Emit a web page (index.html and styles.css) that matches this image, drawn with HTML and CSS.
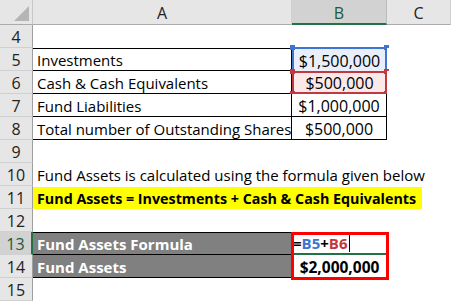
FILE: index.html
```html
<!DOCTYPE html>
<html>
<head>
<meta charset="utf-8">
<link rel="stylesheet" href="styles.css">
</head>
<body>
<div class="sheet">
  <div class="corner"><span class="tri"></span></div>
  <div class="colhead">A</div>
  <div class="colhead active-col">B</div>
  <div class="colhead">C</div>

  <div class="rowhead">4</div><div class="cell"></div><div class="cell"></div><div class="cell"></div>

  <div class="rowhead">5</div>
  <div class="cell bt bb br">Investments</div>
  <div class="cell num ref-blue">$1,500,000<i class="h tl"></i><i class="h tr"></i></div>
  <div class="cell"></div>

  <div class="rowhead">6</div>
  <div class="cell bb br">Cash &amp; Cash Equivalents</div>
  <div class="cell num ref-red">$500,000<i class="h tl"></i><i class="h tr"></i><i class="h bl"></i><i class="h brr"></i></div>
  <div class="cell"></div>

  <div class="rowhead">7</div>
  <div class="cell bb br">Fund Liabilities</div>
  <div class="cell num bb br">$1,000,000</div>
  <div class="cell"></div>

  <div class="rowhead">8</div>
  <div class="cell bb br">Total number of Outstanding Shares</div>
  <div class="cell num bb br">$500,000</div>
  <div class="cell"></div>

  <div class="rowhead">9</div><div class="cell"></div><div class="cell"></div><div class="cell"></div>

  <div class="rowhead">10</div>
  <div class="cell span3">Fund Assets is calculated using the formula given below</div>

  <div class="rowhead">11</div>
  <div class="cell span3 nopad"><span class="hl">Fund Assets = Investments + Cash &amp; Cash Equivalents</span></div>

  <div class="rowhead">12</div><div class="cell"></div><div class="cell"></div><div class="cell"></div>

  <div class="rowhead active-row">13</div>
  <div class="cell dark bt bb br">Fund Assets Formula</div>
  <div class="cell formula"><span class="eq">=</span><span class="fb">B5</span><span class="eq">+</span><span class="fr">B6</span><span class="caret"></span></div>
  <div class="cell"></div>

  <div class="rowhead">14</div>
  <div class="cell dark bb br">Fund Assets</div>
  <div class="cell num bold total">$2,000,000</div>
  <div class="cell"></div>

  <div class="rowhead">15</div><div class="cell"></div><div class="cell"></div><div class="cell"></div>

  <div class="redbox"></div>
</div>
</body>
</html>
```

FILE: styles.css
```css
html, body {
  margin: 0;
  padding: 0;
  background: #ffffff;
}

.sheet {
  position: relative;
  display: grid;
  grid-template-columns: 33px 259px 95px 64px;
  grid-template-rows: 25px repeat(12, 23px);
  width: 451px;
  height: 301px;
  overflow: hidden;
  font-family: "Open Sans", "Liberation Sans", sans-serif;
  font-size: 15px;
  color: #000;
}

.corner {
  background: #e6e6e6;
  border-right: 1px solid #c6c6c6;
  border-bottom: 1px solid #ababab;
  box-sizing: border-box;
  position: relative;
}

.tri {
  position: absolute;
  right: 3px;
  bottom: 3px;
  width: 0;
  height: 0;
  border-left: 15px solid transparent;
  border-bottom: 15px solid #b5b5b5;
}

.colhead {
  background: #e6e6e6;
  border-bottom: 1px solid #ababab;
  border-right: 1px solid #d0d0d0;
  box-sizing: border-box;
  display: flex;
  align-items: center;
  justify-content: center;
  color: #222;
  font-size: 16px;
  padding-top: 2px;
}

.colhead.active-col {
  background: #d2d2d2;
  color: #1d5a36;
  border-bottom: 2px solid #217346;
  border-right-color: #bcbcbc;
}

.rowhead {
  background: #e6e6e6;
  border-right: 1px solid #9f9f9f;
  border-bottom: 1px solid #d0d0d0;
  box-sizing: border-box;
  display: flex;
  align-items: center;
  justify-content: center;
  color: #222;
  font-size: 16px;
  padding-top: 1px;
}

.rowhead.active-row {
  background: #d2d2d2;
  color: #1d5a36;
  border-right: 2px solid #217346;
}

.cell {
  box-sizing: border-box;
  display: flex;
  align-items: center;
  padding: 1px 0 0 4px;
  white-space: nowrap;
  position: relative;
  background: #fff;
}

.span3 {
  grid-column: 2 / 5;
}

.nopad {
  padding-left: 0;
}

.num {
  justify-content: center;
  padding-left: 0;
  font-size: 16px;
}

.bold {
  font-weight: bold;
}

.total {
  font-size: 15.5px;
}

.bt { border-top: 1px solid #000; }
.bb { border-bottom: 1px solid #000; }
.br { border-right: 1px solid #000; }

.hl {
  background: #ffff00;
  font-weight: bold;
  font-size: 14.3px;
  height: 100%;
  display: flex;
  align-items: center;
  padding: 1px 6px 0 4px;
  box-sizing: border-box;
}

.dark {
  background: #808080;
  color: #fff;
  font-weight: bold;
}

.ref-blue {
  background: #e9effa;
  border: 2px solid #3f74d0;
  border-bottom: none;
  margin-top: -1px;
}

.ref-red {
  background: #fbe9e9;
  border: 2px solid #c3383f;
}

.h {
  position: absolute;
  width: 5px;
  height: 5px;
  background: #3f74d0;
}

.ref-red .h {
  background: #c3383f;
}

.tl { left: -4px; top: -4px; }
.tr { right: -4px; top: -4px; }
.bl { left: -4px; bottom: -4px; }
.brr { right: -4px; bottom: -4px; }

.formula {
  padding-left: 1px;
  font-weight: bold;
  font-size: 15px;
  border-bottom: 2px solid #217346;
}

.eq { color: #000; }
.fb { color: #3f74d0; }
.fr { color: #c3383f; }

.caret {
  display: inline-block;
  width: 1px;
  height: 18px;
  background: #000;
  margin-left: 2px;
}

.redbox {
  position: absolute;
  left: 291px;
  top: 232px;
  width: 98px;
  height: 48px;
  box-sizing: border-box;
  border: 3px solid #ff0000;
  pointer-events: none;
}
```
